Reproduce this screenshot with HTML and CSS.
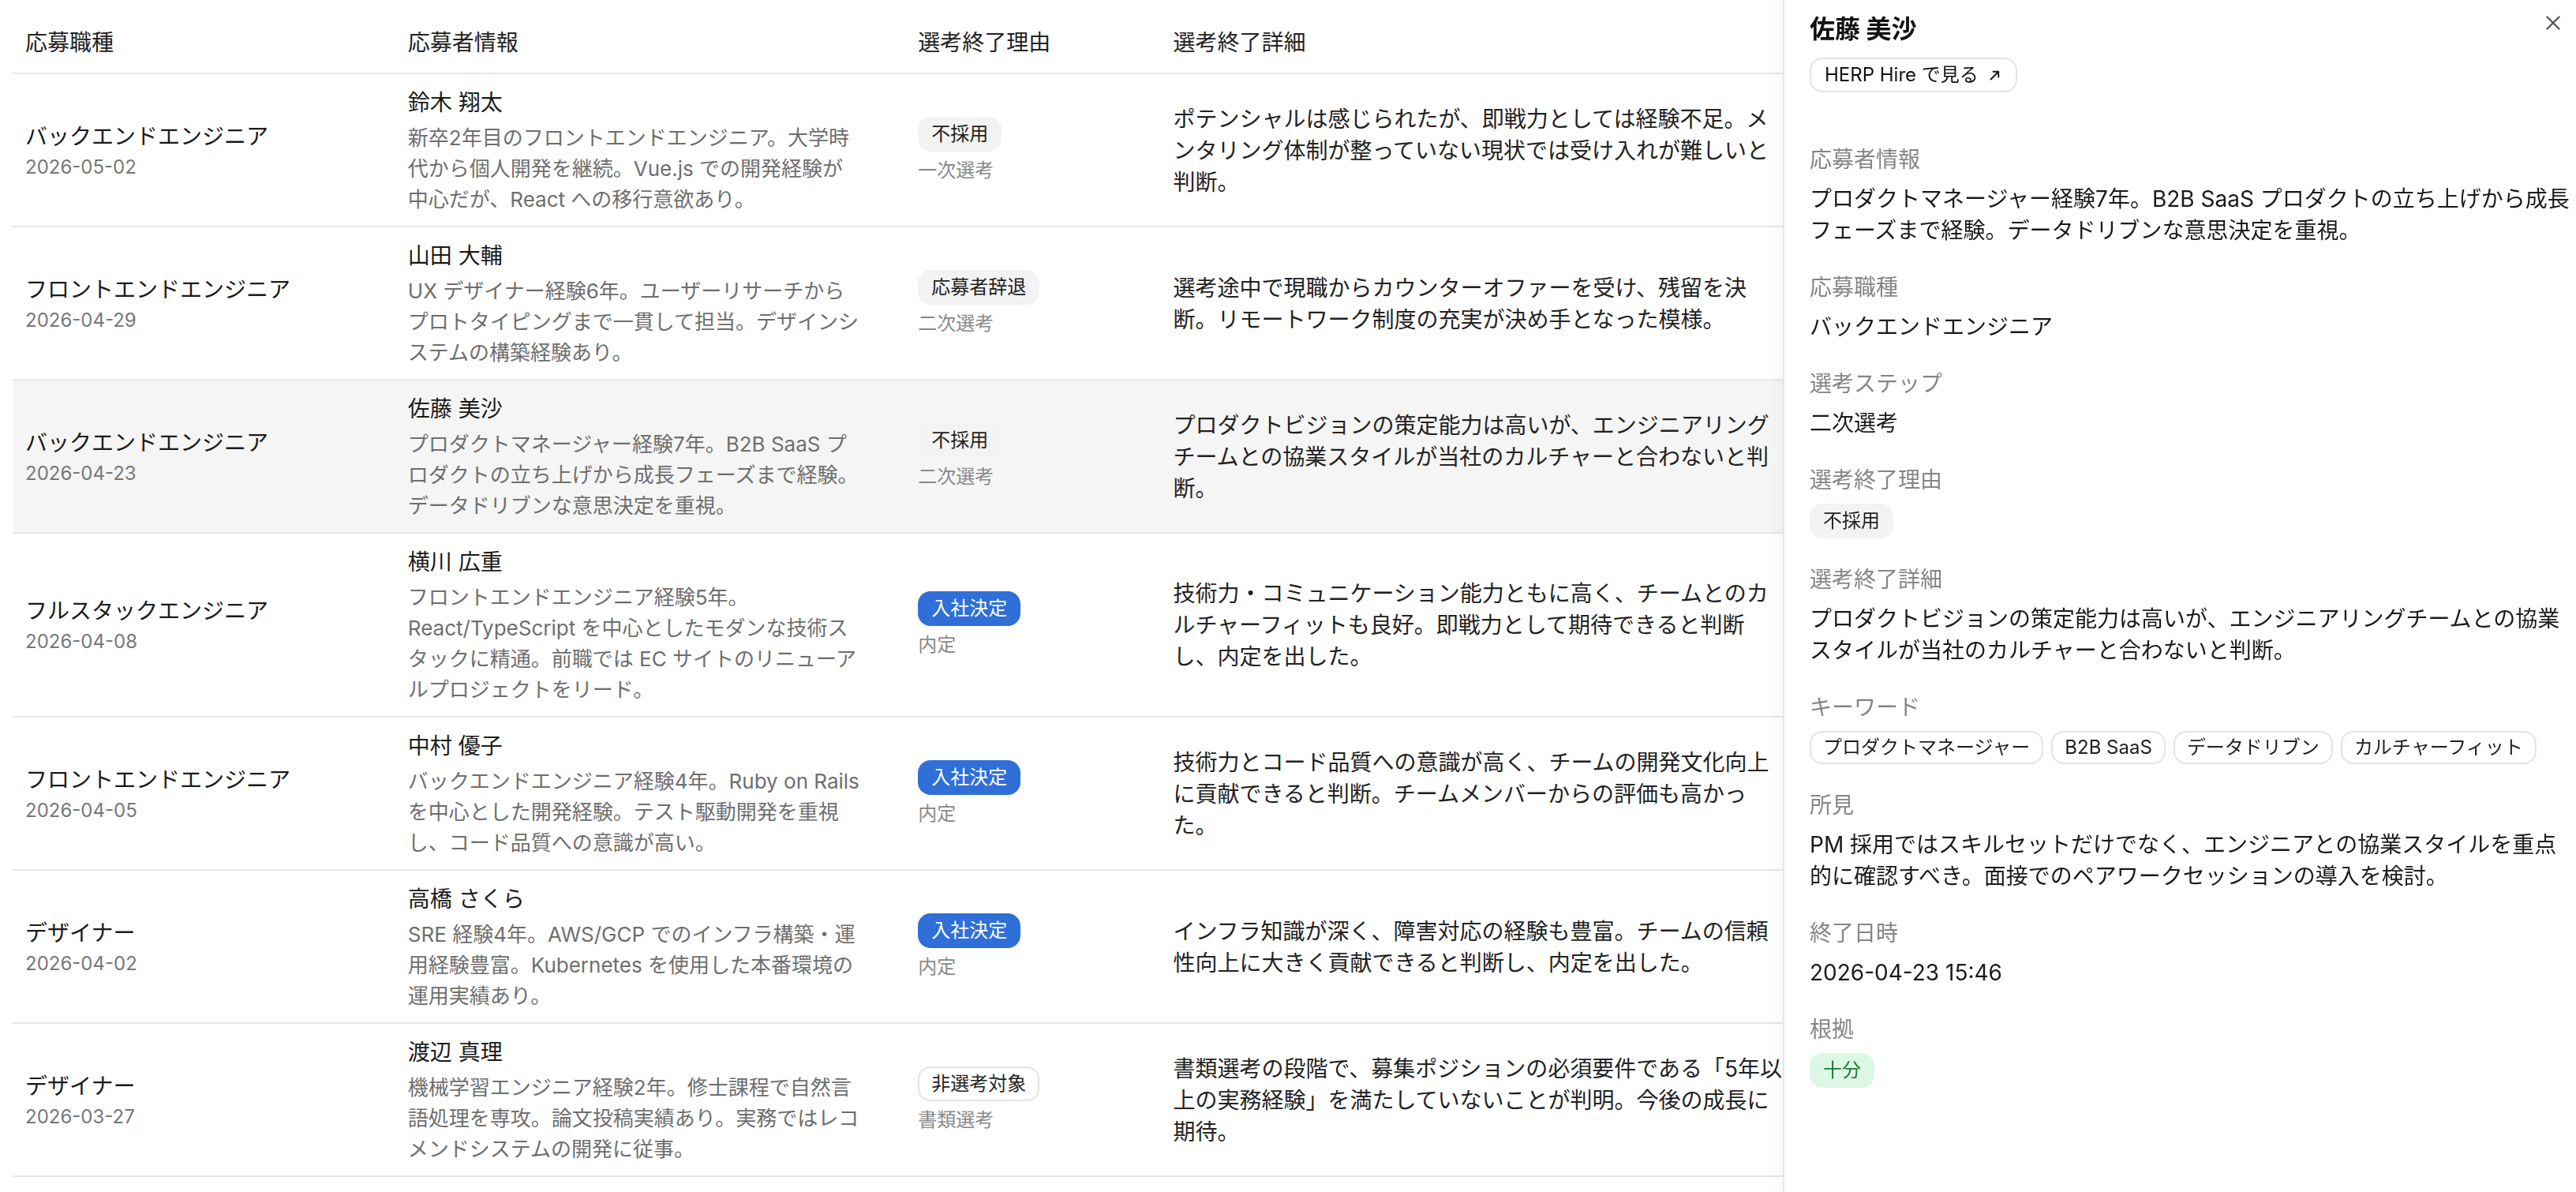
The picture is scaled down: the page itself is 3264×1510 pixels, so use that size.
FILE: index.html
```html
<!DOCTYPE html>
<html lang="ja">
<head>
<meta charset="utf-8">
<title>選考終了一覧</title>
<link rel="stylesheet" href="styles.css">
</head>
<body>
<main class="list">
  <table class="closures">
    <colgroup>
      <col class="c-job">
      <col class="c-cand">
      <col class="c-reason">
      <col class="c-detail">
    </colgroup>
    <thead>
      <tr>
        <th>応募職種</th>
        <th>応募者情報</th>
        <th>選考終了理由</th>
        <th>選考終了詳細</th>
      </tr>
    </thead>
    <tbody>
      <tr>
        <td><div class="job">バックエンドエンジニア</div><div class="date">2026-05-02</div></td>
        <td><div class="name">鈴木 翔太</div><div class="desc">新卒2年目のフロントエンドエンジニア。大学時代から個人開発を継続。Vue.js での開発経験が中心だが、React への移行意欲あり。</div></td>
        <td><span class="badge">不採用</span><div class="step">一次選考</div></td>
        <td><div class="detail">ポテンシャルは感じられたが、即戦力としては経験不足。メンタリング体制が整っていない現状では受け入れが難しいと判断。</div></td>
      </tr>
      <tr>
        <td><div class="job">フロントエンドエンジニア</div><div class="date">2026-04-29</div></td>
        <td><div class="name">山田 大輔</div><div class="desc">UX デザイナー経験6年。ユーザーリサーチからプロトタイピングまで一貫して担当。デザインシステムの構築経験あり。</div></td>
        <td><span class="badge">応募者辞退</span><div class="step">二次選考</div></td>
        <td><div class="detail">選考途中で現職からカウンターオファーを受け、残留を決断。リモートワーク制度の充実が決め手となった模様。</div></td>
      </tr>
      <tr class="is-selected">
        <td><div class="job">バックエンドエンジニア</div><div class="date">2026-04-23</div></td>
        <td><div class="name">佐藤 美沙</div><div class="desc">プロダクトマネージャー経験7年。B2B SaaS プロダクトの立ち上げから成長フェーズまで経験。データドリブンな意思決定を重視。</div></td>
        <td><span class="badge">不採用</span><div class="step">二次選考</div></td>
        <td><div class="detail">プロダクトビジョンの策定能力は高いが、エンジニアリングチームとの協業スタイルが当社のカルチャーと合わないと判断。</div></td>
      </tr>
      <tr>
        <td><div class="job">フルスタックエンジニア</div><div class="date">2026-04-08</div></td>
        <td><div class="name">横川 広重</div><div class="desc">フロントエンドエンジニア経験5年。React/TypeScript を中心としたモダンな技術スタックに精通。前職では EC サイトのリニューアルプロジェクトをリード。</div></td>
        <td><span class="badge badge-hired">入社決定</span><div class="step">内定</div></td>
        <td><div class="detail">技術力・コミュニケーション能力ともに高く、チームとのカルチャーフィットも良好。即戦力として期待できると判断し、内定を出した。</div></td>
      </tr>
      <tr>
        <td><div class="job">フロントエンドエンジニア</div><div class="date">2026-04-05</div></td>
        <td><div class="name">中村 優子</div><div class="desc">バックエンドエンジニア経験4年。Ruby on Rails を中心とした開発経験。テスト駆動開発を重視し、コード品質への意識が高い。</div></td>
        <td><span class="badge badge-hired">入社決定</span><div class="step">内定</div></td>
        <td><div class="detail">技術力とコード品質への意識が高く、チームの開発文化向上に貢献できると判断。チームメンバーからの評価も高かった。</div></td>
      </tr>
      <tr>
        <td><div class="job">デザイナー</div><div class="date">2026-04-02</div></td>
        <td><div class="name">高橋 さくら</div><div class="desc">SRE 経験4年。AWS/GCP でのインフラ構築・運用経験豊富。Kubernetes を使用した本番環境の運用実績あり。</div></td>
        <td><span class="badge badge-hired">入社決定</span><div class="step">内定</div></td>
        <td><div class="detail">インフラ知識が深く、障害対応の経験も豊富。チームの信頼性向上に大きく貢献できると判断し、内定を出した。</div></td>
      </tr>
      <tr>
        <td><div class="job">デザイナー</div><div class="date">2026-03-27</div></td>
        <td><div class="name">渡辺 真理</div><div class="desc">機械学習エンジニア経験2年。修士課程で自然言語処理を専攻。論文投稿実績あり。実務ではレコメンドシステムの開発に従事。</div></td>
        <td><span class="badge badge-outline">非選考対象</span><div class="step">書類選考</div></td>
        <td><div class="detail">書類選考の段階で、募集ポジションの必須要件である「5年以上の実務経験」を満たしていないことが判明。今後の成長に期待。</div></td>
      </tr>
    </tbody>
  </table>
</main>

<aside class="drawer">
  <button class="drawer-close" type="button" aria-label="閉じる">
    <svg width="18" height="18" viewBox="0 0 18 18" aria-hidden="true">
      <path d="M1.5 1.5 L16.5 16.5 M16.5 1.5 L1.5 16.5" stroke="#555" stroke-width="2.4" stroke-linecap="round" fill="none"/>
    </svg>
  </button>
  <header class="drawer-head">
    <h2 class="drawer-name">佐藤 美沙</h2>
    <a class="ext-link" href="#">HERP Hire で見る
      <svg width="13" height="13" viewBox="0 0 13 13" aria-hidden="true">
        <path d="M1.5 11.5 L11 2 M4.5 1.8 H11.2 V8.5" stroke="#1a1a1a" stroke-width="2" stroke-linecap="round" stroke-linejoin="round" fill="none"/>
      </svg>
    </a>
  </header>

  <section class="field">
    <div class="field-label">応募者情報</div>
    <div class="field-value">プロダクトマネージャー経験7年。B2B SaaS プロダクトの立ち上げから成長フェーズまで経験。データドリブンな意思決定を重視。</div>
  </section>
  <section class="field">
    <div class="field-label">応募職種</div>
    <div class="field-value">バックエンドエンジニア</div>
  </section>
  <section class="field">
    <div class="field-label">選考ステップ</div>
    <div class="field-value">二次選考</div>
  </section>
  <section class="field">
    <div class="field-label">選考終了理由</div>
    <div class="field-value"><span class="badge">不採用</span></div>
  </section>
  <section class="field">
    <div class="field-label">選考終了詳細</div>
    <div class="field-value">プロダクトビジョンの策定能力は高いが、エンジニアリングチームとの協業スタイルが当社のカルチャーと合わないと判断。</div>
  </section>
  <section class="field">
    <div class="field-label">キーワード</div>
    <div class="chips">
      <span class="chip">プロダクトマネージャー</span>
      <span class="chip">B2B SaaS</span>
      <span class="chip">データドリブン</span>
      <span class="chip">カルチャーフィット</span>
    </div>
  </section>
  <section class="field">
    <div class="field-label">所見</div>
    <div class="field-value">PM 採用ではスキルセットだけでなく、エンジニアとの協業スタイルを重点的に確認すべき。面接でのペアワークセッションの導入を検討。</div>
  </section>
  <section class="field">
    <div class="field-label">終了日時</div>
    <div class="field-value">2026-04-23 15:46</div>
  </section>
  <section class="field">
    <div class="field-label">根拠</div>
    <div class="field-value"><span class="badge badge-ok">十分</span></div>
  </section>
</aside>
</body>
</html>
```

FILE: styles.css
```css
* {
  box-sizing: border-box;
}

html, body {
  margin: 0;
  background: #ffffff;
}

body {
  font-family: "Inter", "Noto Sans CJK JP", sans-serif;
  color: #1a1a1a;
  font-size: 28px;
  line-height: 40px;
  text-spacing-trim: space-all;
}

/* ---- closures table ---- */

.list {
  padding: 0 16px;
}

.closures {
  width: 100%;
  border-collapse: collapse;
  table-layout: fixed;
}

.c-job { width: 15%; }
.c-cand { width: 20%; }
.c-reason { width: 10%; }
.c-detail { width: 55%; }

.closures th {
  text-align: left;
  font-weight: 400;
  font-size: 28px;
  line-height: 42px;
  color: #222222;
  padding: 33px 16px 17px;
  border-bottom: 2px solid #e6e6e6;
}

.closures td {
  padding: 15px 16px 14px;
  vertical-align: middle;
  border-bottom: 2px solid #e6e6e6;
}

.closures tr.is-selected td {
  background: #f5f5f5;
}

.job {
  font-size: 28px;
  line-height: 42px;
  color: #1a1a1a;
}

.date {
  font-size: 24px;
  line-height: 36px;
  color: #777777;
}

.name {
  font-size: 28px;
  line-height: 42px;
  margin-bottom: 4px;
  color: #1a1a1a;
}

.desc {
  font-size: 26px;
  line-height: 39px;
  color: #6e6e6e;
  max-width: 574px;
}

.step {
  margin-top: 6px;
  font-size: 24px;
  line-height: 36px;
  color: #888888;
}

.detail {
  font-size: 28px;
  line-height: 40px;
  color: #222222;
  max-width: 780px;
}

/* ---- badges and chips ---- */

.badge {
  display: inline-block;
  padding: 4px 17px;
  font-size: 24px;
  line-height: 36px;
  border-radius: 16px;
  background: #f3f3f3;
  color: #1f1f1f;
  white-space: nowrap;
}

.badge-hired {
  background: #2f6fd7;
  color: #ffffff;
}

.badge-outline {
  background: #ffffff;
  border: 2px solid #e3e3e3;
  padding: 2px 15px;
}

.badge-ok {
  background: #ddf7e5;
  color: #1d7a3a;
}

.chips {
  display: flex;
  flex-wrap: wrap;
  gap: 10px;
}

.chip {
  display: inline-block;
  padding: 2px 15px;
  font-size: 24px;
  line-height: 34px;
  border: 2px solid #e3e3e3;
  border-radius: 16px;
  background: #ffffff;
  color: #1f1f1f;
  white-space: nowrap;
}

/* ---- detail drawer ---- */

.drawer {
  position: fixed;
  top: 0;
  right: 0;
  bottom: 0;
  width: 1005px;
  padding: 14px 1px 0 32px;
  background: #ffffff;
  border-left: 2px solid #e6e6e6;
  box-shadow: -6px 0 16px rgba(0, 0, 0, 0.035);
  overflow: hidden;
}

.drawer-close {
  position: absolute;
  top: 20px;
  right: 20px;
  width: 18px;
  height: 18px;
  padding: 0;
  border: 0;
  background: none;
  display: flex;
  cursor: pointer;
}

.drawer-head {
  margin-bottom: 65px;
}

.drawer-name {
  margin: 0 0 13px;
  font-size: 32px;
  line-height: 46px;
  font-weight: 700;
  color: #111111;
}

.ext-link {
  display: inline-flex;
  align-items: center;
  gap: 14px;
  padding: 2px 20px 2px 17px;
  font-size: 24px;
  line-height: 36px;
  color: #111111;
  text-decoration: none;
  border: 2px solid #e3e3e3;
  border-radius: 16px;
}

.field {
  margin-bottom: 32px;
}

.field-label {
  font-size: 28px;
  line-height: 40px;
  color: #858585;
  margin-bottom: 10px;
}

.field-value {
  font-size: 28px;
  line-height: 40px;
  color: #1a1a1a;
}
```
